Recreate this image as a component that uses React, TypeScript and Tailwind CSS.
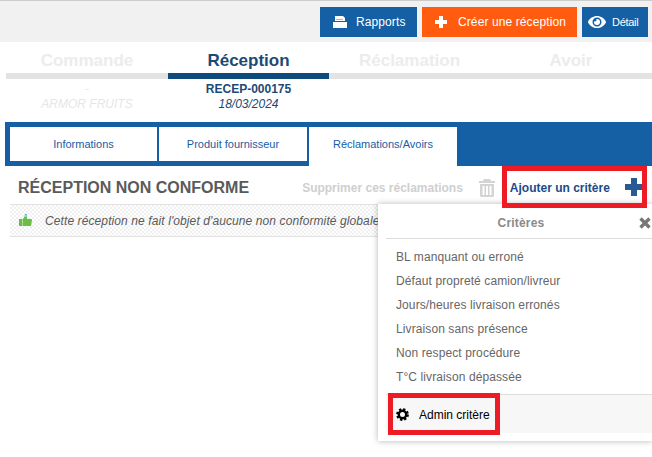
import { FaEye } from 'react-icons/fa';

const criteres = [
  'BL manquant ou erroné',
  'Défaut propreté camion/livreur',
  'Jours/heures livraison erronés',
  'Livraison sans présence',
  'Non respect procédure',
  'T°C livraison dépassée',
];

function PrintIcon() {
  return (
    <svg width="14" height="12" viewBox="0 0 14 12" className="shrink-0">
      <path d="M2 0h8l2 2v3H2z" fill="#ffffff" />
      <path d="M3 3h7v1H3z" fill="#9cc0e0" />
      <path d="M0 6h14v6H0z" fill="#ffffff" />
      <path d="M2 5h10v1H2z" fill="#1560a5" />
    </svg>
  );
}

function PlusIcon({ size, arm, className }: { size: number; arm: number; className: string }) {
  const a = (size - arm) / 2;
  return (
    <svg width={size} height={size} viewBox={`0 0 ${size} ${size}`} className={`shrink-0 ${className}`}>
      <path
        fill="currentColor"
        d={`M${a} 0h${arm}v${a}h${a}v${arm}h-${a}v${a}h-${arm}v-${a}h-${a}v-${arm}h${a}z`}
      />
    </svg>
  );
}

function TrashIcon() {
  return (
    <svg width="16" height="18" viewBox="0 0 16 18" className="shrink-0 text-[#d4d4d4]">
      <path fill="currentColor" d="M5 0h6l1 2h4v2H0V2h4z" />
      <path
        fill="currentColor"
        fillRule="evenodd"
        d="M1 5h14v12l-1 1H2l-1-1zM3.500 7v9h2V7zM7 7v9h2V7zM10.500 7v9h2V7z"
      />
    </svg>
  );
}

function ThumbIcon() {
  return (
    <svg width="13" height="13" viewBox="0 0 13 13" className="shrink-0">
      <path d="M6 0h2v3L7 4H5z" fill="#4cc4c8" />
      <path d="M0 5h3v7H0z" fill="#6cbd45" />
      <path d="M3.500 5 6 3h2v2h4.500l.5 1-1 6H3.500z" fill="#6cbd45" />
      <path d="M6 1h1.500v2H6z" fill="#e2d84a" />
    </svg>
  );
}

function CloseIcon() {
  return (
    <svg width="12" height="12" viewBox="0 0 12 12" className="text-[#777777]">
      <path d="M1.500 1.500l9 9M10.500 1.500l-9 9" stroke="currentColor" strokeWidth="3.400" />
    </svg>
  );
}

function CogIcon() {
  return (
    <svg width="13" height="13" viewBox="0 0 14 14" className="shrink-0 text-black">
      <circle cx="7" cy="7" r="4" fill="none" stroke="currentColor" strokeWidth="2.600" />
      <circle cx="7" cy="7" r="5.800" fill="none" stroke="currentColor" strokeWidth="2.200" strokeDasharray="2.500 2.050" />
    </svg>
  );
}

function Toolbar() {
  return (
    <div className="h-[42px] bg-[#f1f1f1] border-t border-[#cccccc] flex justify-end items-start pt-[6px] pr-[4px] gap-[5px] text-white text-[12px] tracking-[0.1px]">
      <button className="w-[97px] h-[30px] bg-[#1560a5] flex items-center pl-[13px]">
        <PrintIcon />
        <span className="ml-[9px]">Rapports</span>
      </button>
      <button className="w-[155px] h-[30px] bg-[#ff5c10] flex items-center pl-[13px]">
        <PlusIcon size={12} arm={4} className="text-white" />
        <span className="ml-[11px]">Créer une réception</span>
      </button>
      <button className="w-[66px] h-[30px] bg-[#1560a5] flex items-center pl-[6px] text-[11px] tracking-[-0.3px]">
        <FaEye className="w-[18px] h-[18px]" />
        <span className="ml-[6px] mt-[1px]">Détail</span>
      </button>
    </div>
  );
}

function Steps() {
  return (
    <div className="pl-[6px] h-[80px]">
      <div className="grid grid-cols-[162px_161px_161px_162px] text-center">
        <div>
          <div className="h-[31px] pt-[9px] text-[17px] leading-[20px] font-bold text-[#ececec]">Commande</div>
          <div className="h-[6px] bg-[#e3e3e3]" />
          <div className="pt-[3px] text-[12px] leading-[15px] italic text-[#e6e6e6]">
            <div>-</div>
            <div>ARMOR FRUITS</div>
          </div>
        </div>
        <div>
          <div className="h-[31px] pt-[9px] text-[17px] leading-[20px] font-bold text-[#1b4a76]">Réception</div>
          <div className="h-[6px] bg-[#0f4a7c]" />
          <div className="pt-[3px] text-[12px] leading-[15px] text-[#1b4a76]">
            <div className="font-bold">RECEP-000175</div>
            <div className="italic">18/03/2024</div>
          </div>
        </div>
        <div>
          <div className="h-[31px] pt-[9px] text-[17px] leading-[20px] font-bold text-[#ececec]">Réclamation</div>
          <div className="h-[6px] bg-[#e3e3e3]" />
        </div>
        <div>
          <div className="h-[31px] pt-[9px] text-[17px] leading-[20px] font-bold text-[#ececec]">Avoir</div>
          <div className="h-[6px] bg-[#e3e3e3]" />
        </div>
      </div>
    </div>
  );
}

function Tabs() {
  return (
    <div className="ml-[5px] h-[44px] bg-[#1560a5] flex pt-[5px] pl-[5px] gap-[2px] text-[11px] text-[#1560a5]">
      <div className="w-[147px] h-[34px] bg-white flex items-center justify-center">Informations</div>
      <div className="w-[148px] h-[34px] bg-white flex items-center justify-center">Produit fournisseur</div>
      <div className="w-[148px] h-[39px] bg-white flex items-center justify-center pb-[5px]">Réclamations/Avoirs</div>
    </div>
  );
}

function Popover() {
  return (
    <div className="absolute left-[378px] top-[204px] w-[274px] h-[237px] bg-white shadow-[0_0_6px_rgba(0,0,0,0.3)] pl-[8px]">
      <div className="h-[35px] border-b border-[#dddddd] flex items-center pt-[4px] pl-[4px] relative">
        <span className="w-full text-center text-[12px] font-bold text-[#8a8a8a] tracking-[0.2px]">Critères</span>
        <div className="absolute right-[1px] top-[13px]">
          <CloseIcon />
        </div>
      </div>
      <div className="pt-[6px] text-[12px] text-[#666666] tracking-[0.1px]">
        {criteres.map((c) => (
          <div key={c} className="h-[24px] leading-[24px] pl-[10px]">{c}</div>
        ))}
      </div>
      <div className="mt-[5px] h-[39px] bg-[#f7f7f7] border-t border-[#dddddd] flex items-center pl-[10px] text-[12px] text-black">
        <CogIcon />
        <span className="ml-[10px] mt-[1px]">Admin critère</span>
      </div>
    </div>
  );
}

export default function App() {
  return (
    <div className="relative w-[652px] h-[457px] bg-white overflow-hidden font-['Liberation_Sans',Arial,sans-serif]">
      <Toolbar />
      <Steps />
      <Tabs />

      <div className="h-[38px] flex items-center pl-[18px] pt-[6px]">
        <h2 className="text-[16px] font-bold text-[#5a5a5a]">RÉCEPTION NON CONFORME</h2>
        <span className="ml-[53px] text-[12px] font-bold text-[#cfcfcf]">Supprimer ces réclamations</span>
        <div className="ml-[16px]">
          <TrashIcon />
        </div>
        <span className="ml-[15px] text-[12px] font-bold text-[#1b4a8a]">Ajouter un critère</span>
        <PlusIcon size={18} arm={6} className="ml-[15px] mb-[3px] text-[#2a5a94]" />
      </div>

      <div className="ml-[10px] h-[33px] border-y border-[#e2e2e2] flex items-center pl-[9px] bg-[repeating-conic-gradient(#f0f0f0_0_25%,#ffffff_0_50%)] bg-[length:4px_4px]">
        <ThumbIcon />
        <span className="ml-[13px] mt-[1px] text-[12px] italic text-[#5a5a5a] whitespace-nowrap tracking-[0.1px]">
          Cette réception ne fait l'objet d'aucune non conformité globale
        </span>
      </div>

      <Popover />

      {/* annotations rouges */}
      <div className="absolute left-[502px] top-[166px] w-[145px] h-[42px] border-[5px] border-[#ed1c24]" />
      <div className="absolute left-[388px] top-[393px] w-[112px] h-[42px] border-[5px] border-[#ed1c24]" />
    </div>
  );
}
